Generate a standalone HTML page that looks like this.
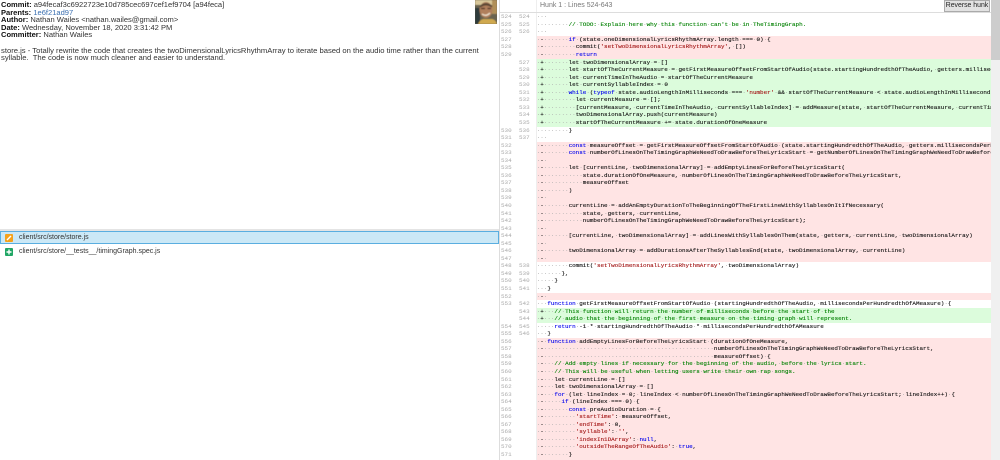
<!DOCTYPE html>
<html><head><meta charset="utf-8"><style>
html,body{margin:0;padding:0;width:1000px;height:460px;overflow:hidden;background:#fff}
body{position:relative;font-family:"Liberation Sans",sans-serif;color:#333}
#info{position:absolute;left:1px;top:1px;width:470px;font-size:7.55px;line-height:7.6px;color:#333}
#info b{color:#111}
#info a{color:#3a6fb0}
#msg{position:absolute;left:1px;top:46.5px;width:480px;font-size:7.65px;line-height:7.6px;color:#333;white-space:pre}
#av{position:absolute;left:475px;top:0;width:22px;height:24px}
#band{position:absolute;left:0;top:229px;width:499px;height:2px;background:#e4e4e4}
#sel{position:absolute;left:0;top:231px;width:497px;height:11px;background:#cbe8f6;border:1px solid #5aaee0}
.f{position:absolute;left:19px;font-size:7px;line-height:8px;color:#333;white-space:pre}
.ic{position:absolute;left:5px;width:8px;height:8px;border-radius:1px}
.ic svg{display:block}
#v{position:absolute;left:499px;top:0;width:1px;height:460px;background:#ddd}
#v2{position:absolute;left:536px;top:0;width:1px;height:460px;background:#eee}
#hh{position:absolute;left:500px;top:0;width:491px;height:12px;border-bottom:1px solid #ddd}
#ht{position:absolute;left:540px;top:2px;font-size:7px;line-height:8px;color:#777}
#btn{position:absolute;left:944px;top:0;width:44px;height:10px;background:#e2e2e2;border:1px solid #aaa;font-size:6.9px;line-height:10px;text-align:center;color:#222}
#sb{position:absolute;left:991px;top:0;width:9px;height:460px;background:#f0f0f0}
#th{position:absolute;left:991px;top:0;width:9px;height:60px;background:#cdcdcd}
#d{position:absolute;left:500px;top:13.3px;width:491px;height:447px;overflow:hidden;font-family:"Liberation Mono",monospace;font-size:5.92px;color:#111;-webkit-text-stroke:.12px}
.r{position:relative;height:7.55px;line-height:7.55px;white-space:pre}
.r u{position:absolute;top:0;text-decoration:none;color:#aaa;-webkit-text-stroke:0}
.r u.o{left:1px}.r u.n{left:19px}
.r code{position:absolute;left:36.7px;top:0;right:0;height:7.55px;font:inherit;overflow:hidden}
.p code{background:#ffe4e4}.g code{background:#dcfcdc}
i{font-style:normal;color:#aaa;-webkit-text-stroke:0}
.k{color:#0000ee}.s{color:#a31515}.c{color:#008000}
</style></head><body>
<div id="info"><b>Commit:</b> a94fecaf3c6922723e10d785cec697cef1ef9704 [a94feca]<br><b>Parents:</b> <a>1e6f21ad97</a><br><b>Author:</b> Nathan Wailes &lt;nathan.wailes@gmail.com&gt;<br><b>Date:</b> Wednesday, November 18, 2020 3:31:42 PM<br><b>Committer:</b> Nathan Wailes</div>
<div id="msg">store.js - Totally rewrite the code that creates the twoDimensionalLyricsRhythmArray to iterate based on the audio time rather than the current
syllable.  The code is now much cleaner and easier to understand.</div>
<svg id="av" viewBox="0 0 22 24"><defs><filter id="bl"><feGaussianBlur stdDeviation=".5"/></filter></defs><rect width="22" height="24" fill="#6a6350"/><g filter="url(#bl)"><rect x="0" y="0" width="22" height="5" fill="#d8c79a"/><rect x="0" y="8" width="5" height="16" fill="#2f3a3a"/><rect x="17" y="0" width="5" height="14" fill="#b08f58"/><ellipse cx="11" cy="10" rx="6.5" ry="8" fill="#b07f5c"/><path d="M4.500 6 Q11 0 17.500 6 L16.500 7.500 Q11 3.500 5.500 7.500Z" fill="#5b4636"/><path d="M6 8.500 H10 M12.500 8.500 H16" stroke="#4a3325" stroke-width="1.200"/><path d="M7 14 Q11 17 15 13" stroke="#efe3d0" stroke-width="1.300" fill="none"/><path d="M3 24 Q6 18 10 19 L15 19 Q20 18 22 24Z" fill="#d0a94f"/></g></svg>
<div id="band"></div><div id="sel"></div>
<div class="ic" style="top:234px;background:#f5a21b"><svg width="8" height="8" viewBox="0 0 8 8"><path d="M2 6 L6 2" stroke="#fff" stroke-width="1.4"/></svg></div>
<div class="f" style="top:234px">client/src/store/store.js</div>
<div class="ic" style="top:248px;background:#21a665"><svg width="8" height="8" viewBox="0 0 8 8"><path d="M4 1.500V6.500M1.500 4H6.500" stroke="#fff" stroke-width="1.400"/></svg></div>
<div class="f" style="top:248px">client/src/store/__tests__/timingGraph.spec.js</div>
<div id="v"></div><div id="v2"></div><div id="hh"></div>
<div id="ht">Hunk 1 : Lines 524-643</div>
<div id="btn">Reverse hunk</div>
<div id="sb"></div><div id="th"></div>
<div id="d">
<div class="r"><u class="o">524</u><u class="n">524</u><code><i>···</i></code></div>
<div class="r"><u class="o">525</u><u class="n">525</u><code><i>·········</i><span class="c">//<i>·</i>TODO:<i>·</i>Explain<i>·</i>here<i>·</i>why<i>·</i>this<i>·</i>function<i>·</i>can't<i>·</i>be<i>·</i>in<i>·</i>TheTimingGraph.</span></code></div>
<div class="r"><u class="o">526</u><u class="n">526</u><code><i>···</i></code></div>
<div class="r p"><u class="o">527</u><code><i>·</i>-<i>·······</i><span class="k">if</span><i>·</i>(state.oneDimensionalLyricsRhythmArray.length<i>·</i>===<i>·</i>0)<i>·</i>{</code></div>
<div class="r p"><u class="o">528</u><code><i>·</i>-<i>·········</i>commit(<span class="s">'setTwoDimensionalLyricsRhythmArray'</span>,<i>·</i>[])</code></div>
<div class="r p"><u class="o">529</u><code><i>·</i>-<i>·········</i><span class="k">return</span></code></div>
<div class="r g"><u class="n">527</u><code><i>·</i>+<i>·······</i>let<i>·</i>twoDimensionalArray<i>·</i>=<i>·</i>[]</code></div>
<div class="r g"><u class="n">528</u><code><i>·</i>+<i>·······</i>let<i>·</i>startOfTheCurrentMeasure<i>·</i>=<i>·</i>getFirstMeasureOffsetFromStartOfAudio(state.startingHundredthOfTheAudio,<i>·</i>getters.millisecondsPerHundredth</code></div>
<div class="r g"><u class="n">529</u><code><i>·</i>+<i>·······</i>let<i>·</i>currentTimeInTheAudio<i>·</i>=<i>·</i>startOfTheCurrentMeasure</code></div>
<div class="r g"><u class="n">530</u><code><i>·</i>+<i>·······</i>let<i>·</i>currentSyllableIndex<i>·</i>=<i>·</i>0</code></div>
<div class="r g"><u class="n">531</u><code><i>·</i>+<i>·······</i><span class="k">while</span><i>·</i>(<span class="k">typeof</span><i>·</i>state.audioLengthInMilliseconds<i>·</i>===<i>·</i><span class="s">'number'</span><i>·</i>&amp;&amp;<i>·</i>startOfTheCurrentMeasure<i>·</i>&lt;<i>·</i>state.audioLengthInMilliseconds)<i>·</i>{</code></div>
<div class="r g"><u class="n">532</u><code><i>·</i>+<i>·········</i>let<i>·</i>currentMeasure<i>·</i>=<i>·</i>[];</code></div>
<div class="r g"><u class="n">533</u><code><i>·</i>+<i>·········</i>[currentMeasure,<i>·</i>currentTimeInTheAudio,<i>·</i>currentSyllableIndex]<i>·</i>=<i>·</i>addMeasure(state,<i>·</i>startOfTheCurrentMeasure,<i>·</i>currentTimeInTheAudio,</code></div>
<div class="r g"><u class="n">534</u><code><i>·</i>+<i>·········</i>twoDimensionalArray.push(currentMeasure)</code></div>
<div class="r g"><u class="n">535</u><code><i>·</i>+<i>·········</i>startOfTheCurrentMeasure<i>·</i>+=<i>·</i>state.durationOfOneMeasure</code></div>
<div class="r"><u class="o">530</u><u class="n">536</u><code><i>·········</i>}</code></div>
<div class="r"><u class="o">531</u><u class="n">537</u><code><i>···</i></code></div>
<div class="r p"><u class="o">532</u><code><i>·</i>-<i>·······</i><span class="k">const</span><i>·</i>measureOffset<i>·</i>=<i>·</i>getFirstMeasureOffsetFromStartOfAudio<i>·</i>(state.startingHundredthOfTheAudio,<i>·</i>getters.millisecondsPerHundredth</code></div>
<div class="r p"><u class="o">533</u><code><i>·</i>-<i>·······</i><span class="k">const</span><i>·</i>numberOfLinesOnTheTimingGraphWeNeedToDrawBeforeTheLyricsStart<i>·</i>=<i>·</i>getNumberOfLinesOnTheTimingGraphWeNeedToDrawBeforeTheLyrics</code></div>
<div class="r p"><u class="o">534</u><code><i>·</i>-<i>·</i></code></div>
<div class="r p"><u class="o">535</u><code><i>·</i>-<i>·······</i>let<i>·</i>[currentLine,<i>·</i>twoDimensionalArray]<i>·</i>=<i>·</i>addEmptyLinesForBeforeTheLyricsStart(</code></div>
<div class="r p"><u class="o">536</u><code><i>·</i>-<i>···········</i>state.durationOfOneMeasure,<i>·</i>numberOfLinesOnTheTimingGraphWeNeedToDrawBeforeTheLyricsStart,</code></div>
<div class="r p"><u class="o">537</u><code><i>·</i>-<i>···········</i>measureOffset</code></div>
<div class="r p"><u class="o">538</u><code><i>·</i>-<i>·······</i>)</code></div>
<div class="r p"><u class="o">539</u><code><i>·</i>-<i>·</i></code></div>
<div class="r p"><u class="o">540</u><code><i>·</i>-<i>·······</i>currentLine<i>·</i>=<i>·</i>addAnEmptyDurationToTheBeginningOfTheFirstLineWithSyllablesOnItIfNecessary(</code></div>
<div class="r p"><u class="o">541</u><code><i>·</i>-<i>···········</i>state,<i>·</i>getters,<i>·</i>currentLine,</code></div>
<div class="r p"><u class="o">542</u><code><i>·</i>-<i>···········</i>numberOfLinesOnTheTimingGraphWeNeedToDrawBeforeTheLyricsStart);</code></div>
<div class="r p"><u class="o">543</u><code><i>·</i>-<i>·</i></code></div>
<div class="r p"><u class="o">544</u><code><i>·</i>-<i>·······</i>[currentLine,<i>·</i>twoDimensionalArray]<i>·</i>=<i>·</i>addLinesWithSyllablesOnThem(state,<i>·</i>getters,<i>·</i>currentLine,<i>·</i>twoDimensionalArray)</code></div>
<div class="r p"><u class="o">545</u><code><i>·</i>-<i>·</i></code></div>
<div class="r p"><u class="o">546</u><code><i>·</i>-<i>·······</i>twoDimensionalArray<i>·</i>=<i>·</i>addDurationsAfterTheSyllablesEnd(state,<i>·</i>twoDimensionalArray,<i>·</i>currentLine)</code></div>
<div class="r p"><u class="o">547</u><code><i>·</i>-<i>·</i></code></div>
<div class="r"><u class="o">548</u><u class="n">538</u><code><i>·········</i>commit(<span class="s">'setTwoDimensionalLyricsRhythmArray'</span>,<i>·</i>twoDimensionalArray)</code></div>
<div class="r"><u class="o">549</u><u class="n">539</u><code><i>·······</i>},</code></div>
<div class="r"><u class="o">550</u><u class="n">540</u><code><i>·····</i>}</code></div>
<div class="r"><u class="o">551</u><u class="n">541</u><code><i>···</i>}</code></div>
<div class="r p"><u class="o">552</u><code><i>·</i>-<i>·</i></code></div>
<div class="r"><u class="o">553</u><u class="n">542</u><code><i>···</i><span class="k">function</span><i>·</i>getFirstMeasureOffsetFromStartOfAudio<i>·</i>(startingHundredthOfTheAudio,<i>·</i>millisecondsPerHundredthOfAMeasure)<i>·</i>{</code></div>
<div class="r g"><u class="n">543</u><code><i>·</i>+<i>···</i><span class="c">//<i>·</i>This<i>·</i>function<i>·</i>will<i>·</i>return<i>·</i>the<i>·</i>number<i>·</i>of<i>·</i>milliseconds<i>·</i>before<i>·</i>the<i>·</i>start<i>·</i>of<i>·</i>the</span></code></div>
<div class="r g"><u class="n">544</u><code><i>·</i>+<i>···</i><span class="c">//<i>·</i>audio<i>·</i>that<i>·</i>the<i>·</i>beginning<i>·</i>of<i>·</i>the<i>·</i>first<i>·</i>measure<i>·</i>on<i>·</i>the<i>·</i>timing<i>·</i>graph<i>·</i>will<i>·</i>represent.</span></code></div>
<div class="r"><u class="o">554</u><u class="n">545</u><code><i>·····</i><span class="k">return</span><i>·</i>-1<i>·</i>*<i>·</i>startingHundredthOfTheAudio<i>·</i>*<i>·</i>millisecondsPerHundredthOfAMeasure</code></div>
<div class="r"><u class="o">555</u><u class="n">546</u><code><i>···</i>}</code></div>
<div class="r p"><u class="o">556</u><code><i>·</i>-<i>·</i><span class="k">function</span><i>·</i>addEmptyLinesForBeforeTheLyricsStart<i>·</i>(durationOfOneMeasure,</code></div>
<div class="r p"><u class="o">557</u><code><i>·</i>-<i>················································</i>numberOfLinesOnTheTimingGraphWeNeedToDrawBeforeTheLyricsStart,</code></div>
<div class="r p"><u class="o">558</u><code><i>·</i>-<i>················································</i>measureOffset)<i>·</i>{</code></div>
<div class="r p"><u class="o">559</u><code><i>·</i>-<i>···</i><span class="c">//<i>·</i>Add<i>·</i>empty<i>·</i>lines<i>·</i>if<i>·</i>necessary<i>·</i>for<i>·</i>the<i>·</i>beginning<i>·</i>of<i>·</i>the<i>·</i>audio,<i>·</i>before<i>·</i>the<i>·</i>lyrics<i>·</i>start.</span></code></div>
<div class="r p"><u class="o">560</u><code><i>·</i>-<i>···</i><span class="c">//<i>·</i>This<i>·</i>will<i>·</i>be<i>·</i>useful<i>·</i>when<i>·</i>letting<i>·</i>users<i>·</i>write<i>·</i>their<i>·</i>own<i>·</i>rap<i>·</i>songs.</span></code></div>
<div class="r p"><u class="o">561</u><code><i>·</i>-<i>···</i>let<i>·</i>currentLine<i>·</i>=<i>·</i>[]</code></div>
<div class="r p"><u class="o">562</u><code><i>·</i>-<i>···</i>let<i>·</i>twoDimensionalArray<i>·</i>=<i>·</i>[]</code></div>
<div class="r p"><u class="o">563</u><code><i>·</i>-<i>···</i><span class="k">for</span><i>·</i>(let<i>·</i>lineIndex<i>·</i>=<i>·</i>0;<i>·</i>lineIndex<i>·</i>&lt;<i>·</i>numberOfLinesOnTheTimingGraphWeNeedToDrawBeforeTheLyricsStart;<i>·</i>lineIndex++)<i>·</i>{</code></div>
<div class="r p"><u class="o">564</u><code><i>·</i>-<i>·····</i><span class="k">if</span><i>·</i>(lineIndex<i>·</i>===<i>·</i>0)<i>·</i>{</code></div>
<div class="r p"><u class="o">565</u><code><i>·</i>-<i>·······</i><span class="k">const</span><i>·</i>preAudioDuration<i>·</i>=<i>·</i>{</code></div>
<div class="r p"><u class="o">566</u><code><i>·</i>-<i>·········</i><span class="s">'startTime'</span>:<i>·</i>measureOffset,</code></div>
<div class="r p"><u class="o">567</u><code><i>·</i>-<i>·········</i><span class="s">'endTime'</span>:<i>·</i>0,</code></div>
<div class="r p"><u class="o">568</u><code><i>·</i>-<i>·········</i><span class="s">'syllable'</span>:<i>·</i><span class="s">''</span>,</code></div>
<div class="r p"><u class="o">569</u><code><i>·</i>-<i>·········</i><span class="s">'indexIn1DArray'</span>:<i>·</i><span class="k">null</span>,</code></div>
<div class="r p"><u class="o">570</u><code><i>·</i>-<i>·········</i><span class="s">'outsideTheRangeOfTheAudio'</span>:<i>·</i><span class="k">true</span>,</code></div>
<div class="r p"><u class="o">571</u><code><i>·</i>-<i>·······</i>}</code></div>
<div class="r p"><u class="o">572</u><code><i>·</i>-<i>·······</i>currentLine.push(preAudioDuration)</code></div>
</div>
</body></html>
